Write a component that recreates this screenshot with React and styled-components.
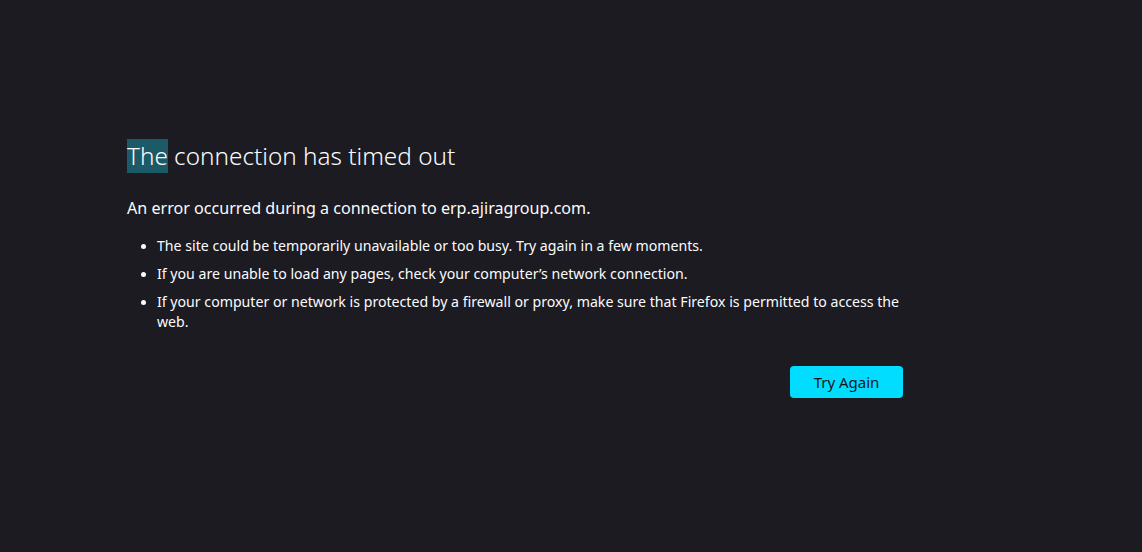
import React from 'react';
import styled, { createGlobalStyle } from 'styled-components';

const GlobalStyle = createGlobalStyle`
  html, body {
    margin: 0;
    padding: 0;
    background: #1c1b22;
  }
  body {
    font-family: "Noto Sans", "Open Sans", sans-serif;
    color: #fbfbfe;
  }
`;

const Page = styled.div`
  width: 1142px;
  height: 552px;
  box-sizing: border-box;
  padding: 139px 0 0 127px;
  background: #1c1b22;
`;

const Container = styled.div`
  width: 776px;
`;

const Title = styled.h1`
  margin: 0;
  font-size: 24.3px;
  font-weight: 300;
  line-height: 34px;
  color: #fbfbfe;
`;

const Selected = styled.span`
  display: inline-block;
  background: #1b5a66;
`;

const Description = styled.p`
  margin: 23px 0 0;
  font-size: 16.1px;
  line-height: 24px;
`;

const List = styled.ul`
  margin: 16px 0 0;
  padding-left: 30px;
  font-size: 14.15px;
  line-height: 20px;
`;

const Item = styled.li`
  margin-bottom: 8px;
  &::marker {
    font-size: 13px;
  }
`;

const Actions = styled.div`
  display: flex;
  justify-content: flex-end;
  margin-top: 34px;
`;

const Button = styled.button`
  width: 113px;
  height: 32px;
  border: 0;
  border-radius: 4px;
  background: #00ddff;
  color: #15141a;
  font-family: "Noto Sans", sans-serif;
  font-size: 15px;
  cursor: pointer;
`;

export default function App() {
  return (
    <Page>
      <GlobalStyle />
      <Container>
        <Title>
          <Selected>The</Selected> connection has timed out
        </Title>
        <Description>An error occurred during a connection to erp.ajiragroup.com.</Description>
        <List>
          <Item>The site could be temporarily unavailable or too busy. Try again in a few moments.</Item>
          <Item>If you are unable to load any pages, check your computer’s network connection.</Item>
          <Item>If your computer or network is protected by a firewall or proxy, make sure that Firefox is permitted to access the web.</Item>
        </List>
        <Actions>
          <Button>Try Again</Button>
        </Actions>
      </Container>
    </Page>
  );
}
